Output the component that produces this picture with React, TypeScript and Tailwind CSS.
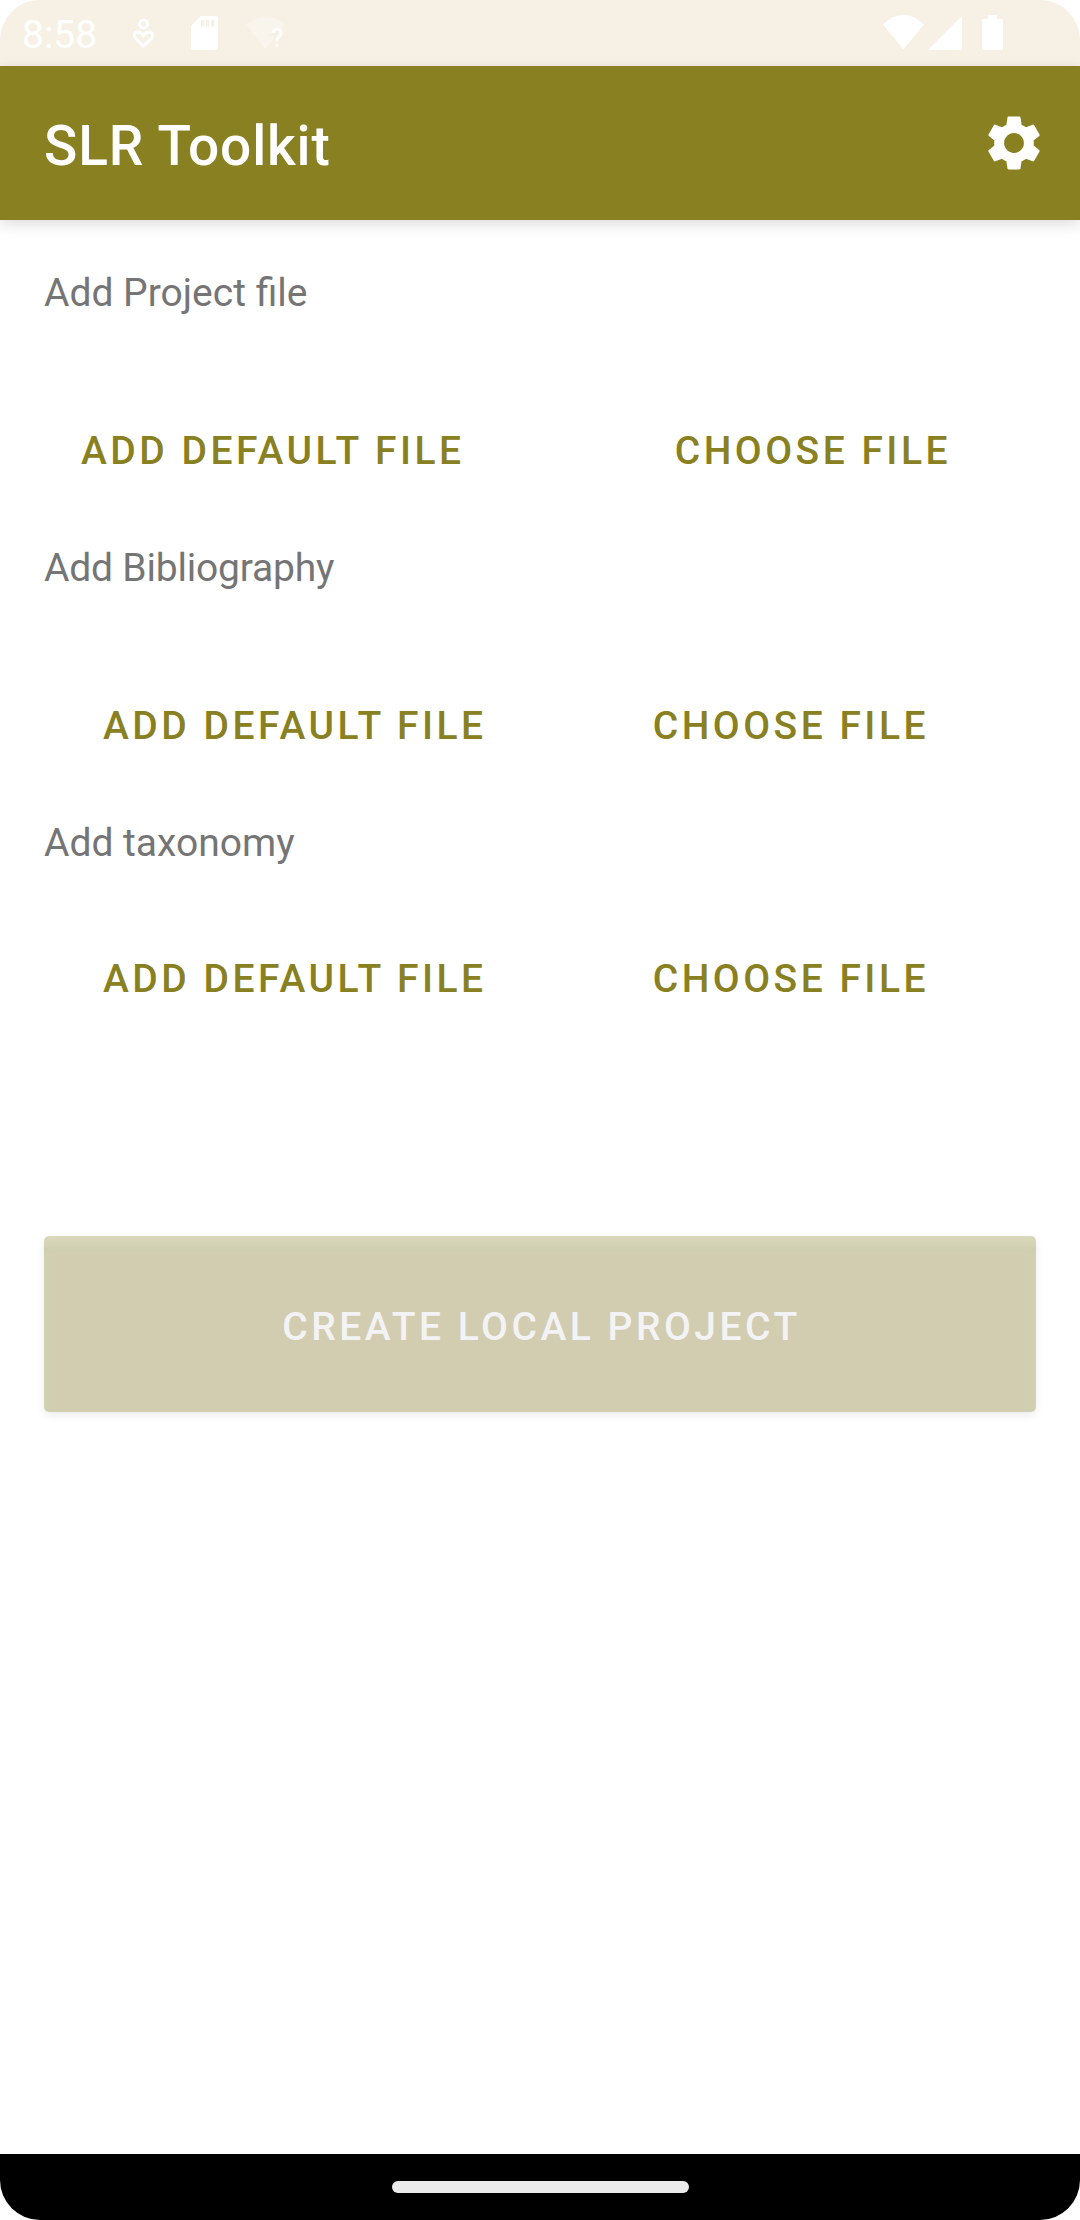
import { MdSettings } from "react-icons/md";

function StatusBar() {
  return (
    <div className="flex h-[66px] shrink-0 items-start bg-[#f7f0e4] text-white">
      <span className="mt-[12px] ml-[22px] w-[98px] text-[39px] leading-[46px]">8:58</span>
      <svg className="h-[66px] w-[180px]" viewBox="120 0 180 66" fill="none">
        <circle cx="143.5" cy="24" r="4" stroke="#fff" strokeWidth="2.9" />
        <path
          d="M143.5 46 L135.6 38.2 C133.4 35.8 134.2 32.2 137.6 31.9 C140.2 31.7 141.8 33.2 143.5 35.6 C145.2 33.2 146.8 31.7 149.4 31.9 C152.8 32.2 153.6 35.8 151.4 38.2 Z"
          stroke="#fff"
          strokeWidth="3"
        />
        <path
          fillRule="evenodd"
          fill="#fff"
          d="M201 16 H216 Q218 16 218 18 V48 Q218 50 216 50 H193 Q191 50 191 48 V26 Z M201 20 V26.5 H204.3 V20 Z M206 20 V26.5 H209.3 V20 Z M211 20 V26.5 H214.5 V20 Z"
        />
        <path fill="#f9f5ed" d="M246 24.2 Q265.5 9.5 285.3 24.2 L282 28.6 Q271 26.5 270.4 36.5 H273.5 V39.5 L265.4 49 Z" />
        <text x="271" y="47.3" fill="#fff" fontSize="25.5" fontWeight="500">?</text>
      </svg>
      <svg className="ml-auto h-[66px] w-[200px]" viewBox="880 0 200 66" fill="#fff">
        <path d="M883 24.4 Q903.4 5.8 924 24.4 L903.4 49.3 Z" />
        <path d="M928 50 L962 16 V50 Z" />
        <path d="M988 15 H997 V19 H1001.5 Q1003 19 1003 20.5 V48.5 Q1003 50 1001.5 50 H983.5 Q982 50 982 48.5 V20.5 Q982 19 983.5 19 H988 Z" />
      </svg>
    </div>
  );
}

type FileSectionProps = { title: string; titleClass?: string; rowClass: string };

function FileSection({ title, titleClass = "", rowClass }: FileSectionProps) {
  return (
    <section className="h-[275px]">
      <p className={`pl-[44px] text-[39px] leading-[46px] text-[#757575] ${titleClass}`}>{title}</p>
      <div className={`flex justify-between text-[39px] leading-[46px] font-medium tracking-[3.5px] whitespace-nowrap text-[#888021] ${rowClass}`}>
        <button>ADD DEFAULT FILE</button>
        <button>CHOOSE FILE</button>
      </div>
    </section>
  );
}

export default function App() {
  return (
    <div className="h-[2220px] w-[1080px] bg-white">
      <div className="flex h-full flex-col overflow-hidden rounded-[40px] bg-white font-['Roboto',sans-serif]">
        <StatusBar />
        <header className="flex h-[154px] shrink-0 items-center justify-between bg-[#888021] pr-[33px] pl-[44px] text-white shadow-[0_4px_14px_rgba(0,0,0,0.14)]">
          <h1 className="pt-[6px] text-[55px] leading-[64px] font-medium tracking-[0.85px]">SLR Toolkit</h1>
          <MdSettings size={66} />
        </header>
        <main className="flex grow flex-col pt-[50px]">
          <FileSection title="Add Project file" rowClass="mt-[112px] pr-[129px] pl-[81px]" />
          <FileSection title="Add Bibliography" titleClass="tracking-[-0.2px]" rowClass="mt-[112px] pr-[151px] pl-[103px]" />
          <FileSection title="Add taxonomy" rowClass="mt-[90px] pr-[151px] pl-[103px]" />
          <button className="mx-[44px] mt-[141px] flex h-[176px] items-center justify-center rounded-[5px] bg-[#d2cdb1] bg-[linear-gradient(to_bottom,#dad9bb,#cfceb0_14px,transparent_19px),linear-gradient(to_right,#d2d3b4,#cfcfb0_5px,transparent_14px,transparent_978px,#cfcfb0_988px,#d2d3b4)] pt-[6px] pl-[3px] text-[39px] leading-[46px] font-medium tracking-[3.5px] text-[#f3f3f5] shadow-[0_3px_9px_rgba(0,0,0,0.08)]">
            CREATE LOCAL PROJECT
          </button>
        </main>
        <footer className="flex h-[66px] shrink-0 items-start justify-center bg-black pt-[27px]">
          <div className="h-[12px] w-[297px] rounded-full bg-[#ebebeb]" />
        </footer>
      </div>
    </div>
  );
}
